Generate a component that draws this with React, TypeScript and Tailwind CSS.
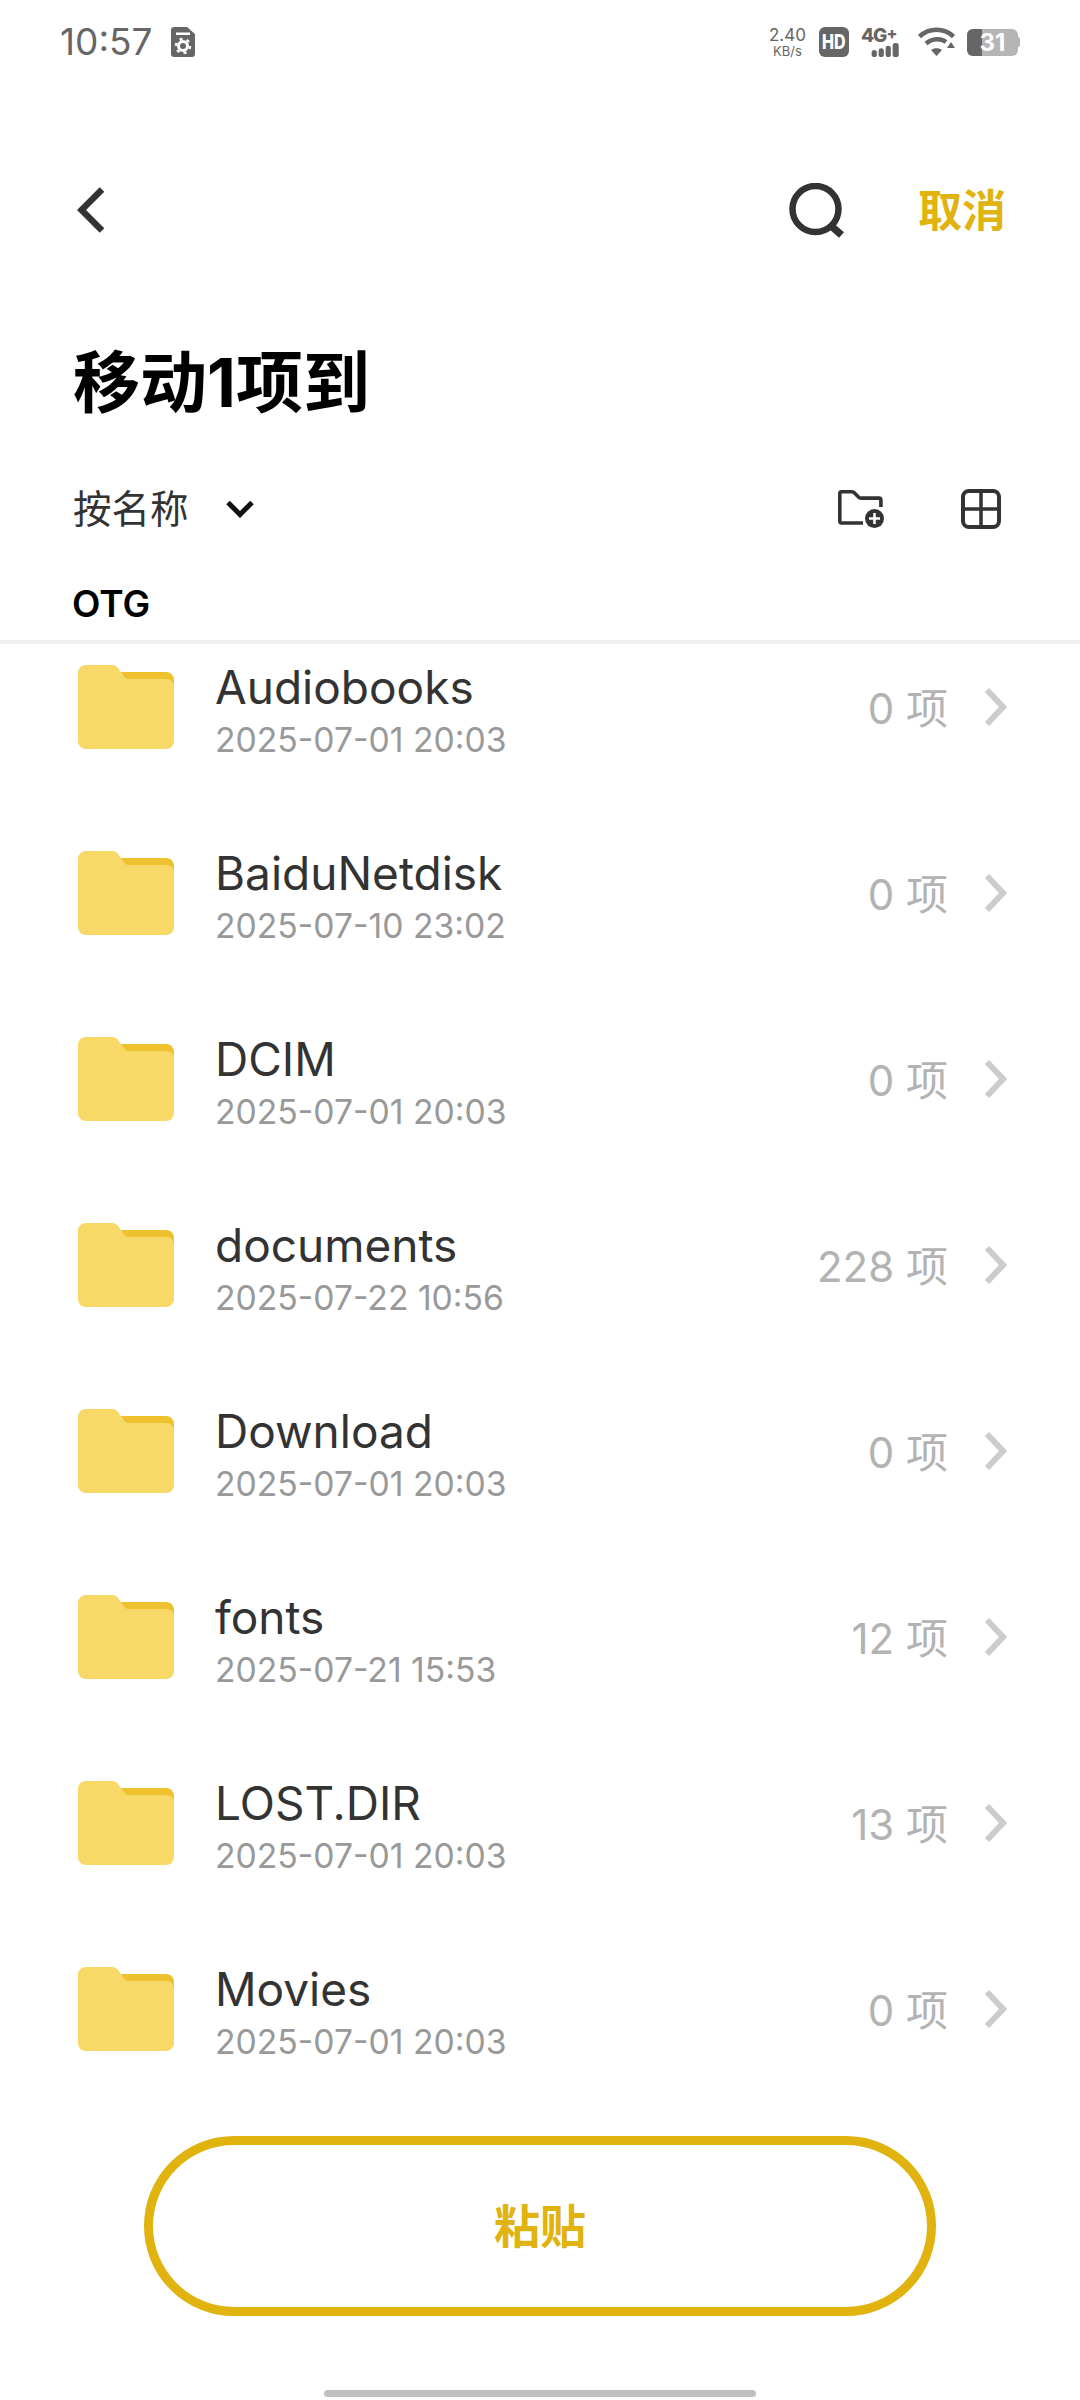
const FONT = "font-['Inter','Noto_Sans_CJK_SC',sans-serif]";

const rows = [
  { name: "Audiobooks", date: "2025-07-01 20:03", count: "0" },
  { name: "BaiduNetdisk", date: "2025-07-10 23:02", count: "0" },
  { name: "DCIM", date: "2025-07-01 20:03", count: "0" },
  { name: "documents", date: "2025-07-22 10:56", count: "228" },
  { name: "Download", date: "2025-07-01 20:03", count: "0" },
  { name: "fonts", date: "2025-07-21 15:53", count: "12" },
  { name: "LOST.DIR", date: "2025-07-01 20:03", count: "13" },
  { name: "Movies", date: "2025-07-01 20:03", count: "0" },
];

function Folder() {
  return (
    <svg width="96" height="84" viewBox="0 0 96 84" className="shrink-0">
      <path d="M40 7H88C92.5 7 96 10.5 96 15V30H40Z" fill="#eec22e" />
      <path
        d="M8 0H34C37 0 39 1.2 40.5 3.5L46 11.5C47 13 48.5 14 50.5 14H87C92 14 96 16 96 22V76C96 80.5 92.5 84 88 84H8C3.5 84 0 80.5 0 76V8C0 3.5 3.5 0 8 0Z"
        fill="#f8d968"
      />
    </svg>
  );
}

function Row({ name, date, count }: { name: string; date: string; count: string }) {
  return (
    <div className="flex h-[186px] items-center pl-[78px] pr-[73px]">
      <Folder />
      <div className="ml-[41px] flex min-w-0 flex-1 flex-col pt-[8px]">
        <div className="h-[54px] text-[46px] leading-[54px] text-[#333333]">{name}</div>
        <div className="mt-[4px] h-[44px] text-[33.7px] leading-[44px] text-[#999999]">{date}</div>
      </div>
      <div className="mt-[3px] text-[42px] leading-[50px] text-[#b3b3b3]">{count} 项</div>
      <svg width="24" height="40" viewBox="0 0 24 40" className="ml-[35px] shrink-0">
        <path d="M4 3L20 20L4 37" fill="none" stroke="#cccccc" strokeWidth="6" />
      </svg>
    </div>
  );
}

function StatusBar() {
  return (
    <div className="flex h-[84px] items-center justify-between pl-[60px] pr-[60px] text-[#666666]">
      <div className="flex items-center">
        <span className="text-[37px] leading-[44px]">10:57</span>
        <svg width="24" height="30" viewBox="0 0 24 30" className="ml-[19px]">
          <path d="M3 0H16L24 7V27C24 28.7 22.7 30 21 30H3C1.3 30 0 28.7 0 27V3C0 1.3 1.3 0 3 0Z" fill="#666666" />
          <rect x="5" y="5.5" width="14" height="2.5" fill="#ffffff" />
          <circle cx="12" cy="19" r="4.5" fill="none" stroke="#ffffff" strokeWidth="3" />
          <circle cx="12" cy="19" r="7" fill="none" stroke="#ffffff" strokeWidth="2.5" strokeDasharray="3 4.33" />
        </svg>
      </div>
      <div className="flex items-center">
        <div className="flex w-[39px] flex-col items-center">
          <span className="text-[17px] leading-[17px]">2.40</span>
          <span className="mt-[1px] text-[13px] leading-[13px]">KB/s</span>
        </div>
        <div className="ml-[12px] flex h-[30px] w-[30px] items-center justify-center rounded-[6px] bg-[#666666] text-white">
          <span className="inline-block scale-x-[0.8] text-[20px] font-extrabold leading-[30px]">HD</span>
        </div>
        <div className="ml-[12px] flex h-[30px] w-[44px] flex-col">
          <div className="flex h-[16px] items-start leading-[16px]">
            <span className="text-[19px] font-extrabold leading-[18px] tracking-[-1px]">4G</span>
            <span className="text-[16px] font-extrabold leading-[12px]">+</span>
          </div>
          <svg width="44" height="16" viewBox="0 0 44 16">
            <rect x="9" y="8" width="6" height="8" rx="3" fill="#666666" />
            <rect x="17" y="6" width="6" height="10" rx="3" fill="#666666" />
            <rect x="25" y="3" width="6" height="13" rx="3" fill="#666666" />
            <rect x="33" y="0" width="7" height="16" rx="3" fill="#666666" />
          </svg>
        </div>
        <svg width="37" height="30" viewBox="0 0 37 30" className="ml-[13px]">
          <path d="M1.5 9.5C11 0.5 26 0.5 35.5 9.5" fill="none" stroke="#666666" strokeWidth="4.5" />
          <path d="M8 16.5C14 11 23 11 28 15" fill="none" stroke="#666666" strokeWidth="4.5" />
          <path d="M18.5 29L13 23C16 20.5 21 20.5 24 23Z" fill="#666666" />
          <path d="M29 21L33 15L37 21Z" fill="#666666" />
        </svg>
        <div className="relative ml-[12px] flex h-[27px] w-[51px] items-center justify-center rounded-[6px] bg-[#b5b5b5]">
          <div className="absolute inset-y-0 left-0 w-[15px] rounded-l-[6px] bg-[#666666]" />
          <span className="relative text-[24px] font-bold leading-[27px] text-white">31</span>
        </div>
        <div className="h-[10px] w-[2px] rounded-r-[2px] bg-[#b5b5b5]" />
      </div>
    </div>
  );
}

export default function App() {
  return (
    <div className={`flex h-[2400px] w-[1080px] flex-col overflow-hidden bg-white ${FONT}`}>
      <StatusBar />

      <div className="flex h-[252px] items-center pl-[77px] pr-[74px]">
        <svg width="28" height="46" viewBox="0 0 28 46">
          <path d="M25 2.5L4.5 23L25 43.5" fill="none" stroke="#333333" strokeWidth="6.5" />
        </svg>
        <div className="flex-1" />
        <svg width="56" height="55" viewBox="0 0 56 55">
          <circle cx="26.5" cy="26" r="23" fill="none" stroke="#333333" strokeWidth="6.5" />
          <path d="M41 42L52.5 52" fill="none" stroke="#333333" strokeWidth="7.5" />
        </svg>
        <span className="ml-[73px] mt-[2px] text-[44px] font-semibold leading-[50px] text-[#e0b30f]">取消</span>
      </div>

      <div className="flex h-[94px] items-center pl-[73px] text-[67px] font-bold leading-[94px] text-black">
        移动1项到
      </div>

      <div className="mt-[29px] flex h-[100px] items-center pl-[73px] pr-[79px]">
        <span className="text-[38.5px] leading-[48px] text-[#333333]">按名称</span>
        <svg width="28" height="18" viewBox="0 0 28 18" className="ml-[37px]">
          <path d="M2 2.5L14 14.5L26 2.5" fill="none" stroke="#111111" strokeWidth="5" />
        </svg>
        <div className="flex-1" />
        <svg width="47" height="38" viewBox="0 0 47 38">
          <path
            d="M25 33H3.5C2.1 33 1.8 32.2 1.8 30.8V3.5C1.8 2.1 2.1 1.8 3.5 1.8H14C15 1.8 15.8 2.2 16.5 3L20.5 7C21.2 7.7 22 8.1 23 8.1H41C42.4 8.1 42.9 8.9 42.9 10.3V17"
            fill="none"
            stroke="#333333"
            strokeWidth="3.6"
          />
          <circle cx="36.5" cy="28.5" r="9.5" fill="#333333" />
          <path d="M36.5 23V34M31 28.5H42" stroke="#ffffff" strokeWidth="2.6" />
        </svg>
        <svg width="40" height="40" viewBox="0 0 40 40" className="ml-[76px]">
          <rect x="2" y="2" width="36" height="36" rx="6" fill="none" stroke="#333333" strokeWidth="4" />
          <path d="M20 2V38M2 20H38" stroke="#333333" strokeWidth="3.5" />
        </svg>
      </div>

      <div className="mt-[15px] flex h-[60px] items-center pl-[72px] text-[37px] font-semibold leading-[60px] text-black">
        OTG
      </div>
      <div className="mt-[6px] h-[4px] shrink-0 bg-[#f0f0f0]" />

      <div className="h-[1492px] shrink-0 overflow-hidden">
        <div className="-mt-[30px]">
          {rows.map((r) => (
            <Row key={r.name} {...r} />
          ))}
        </div>
      </div>

      <div className="mx-[144px] flex h-[180px] shrink-0 items-center justify-center rounded-full border-[9px] border-[#e0b30f] text-[46px] font-bold text-[#e0b30f]">
        粘贴
      </div>

      <div className="mx-auto mt-[74px] h-[7px] w-[432px] rounded-full bg-[#c0c0c0]" />
    </div>
  );
}
